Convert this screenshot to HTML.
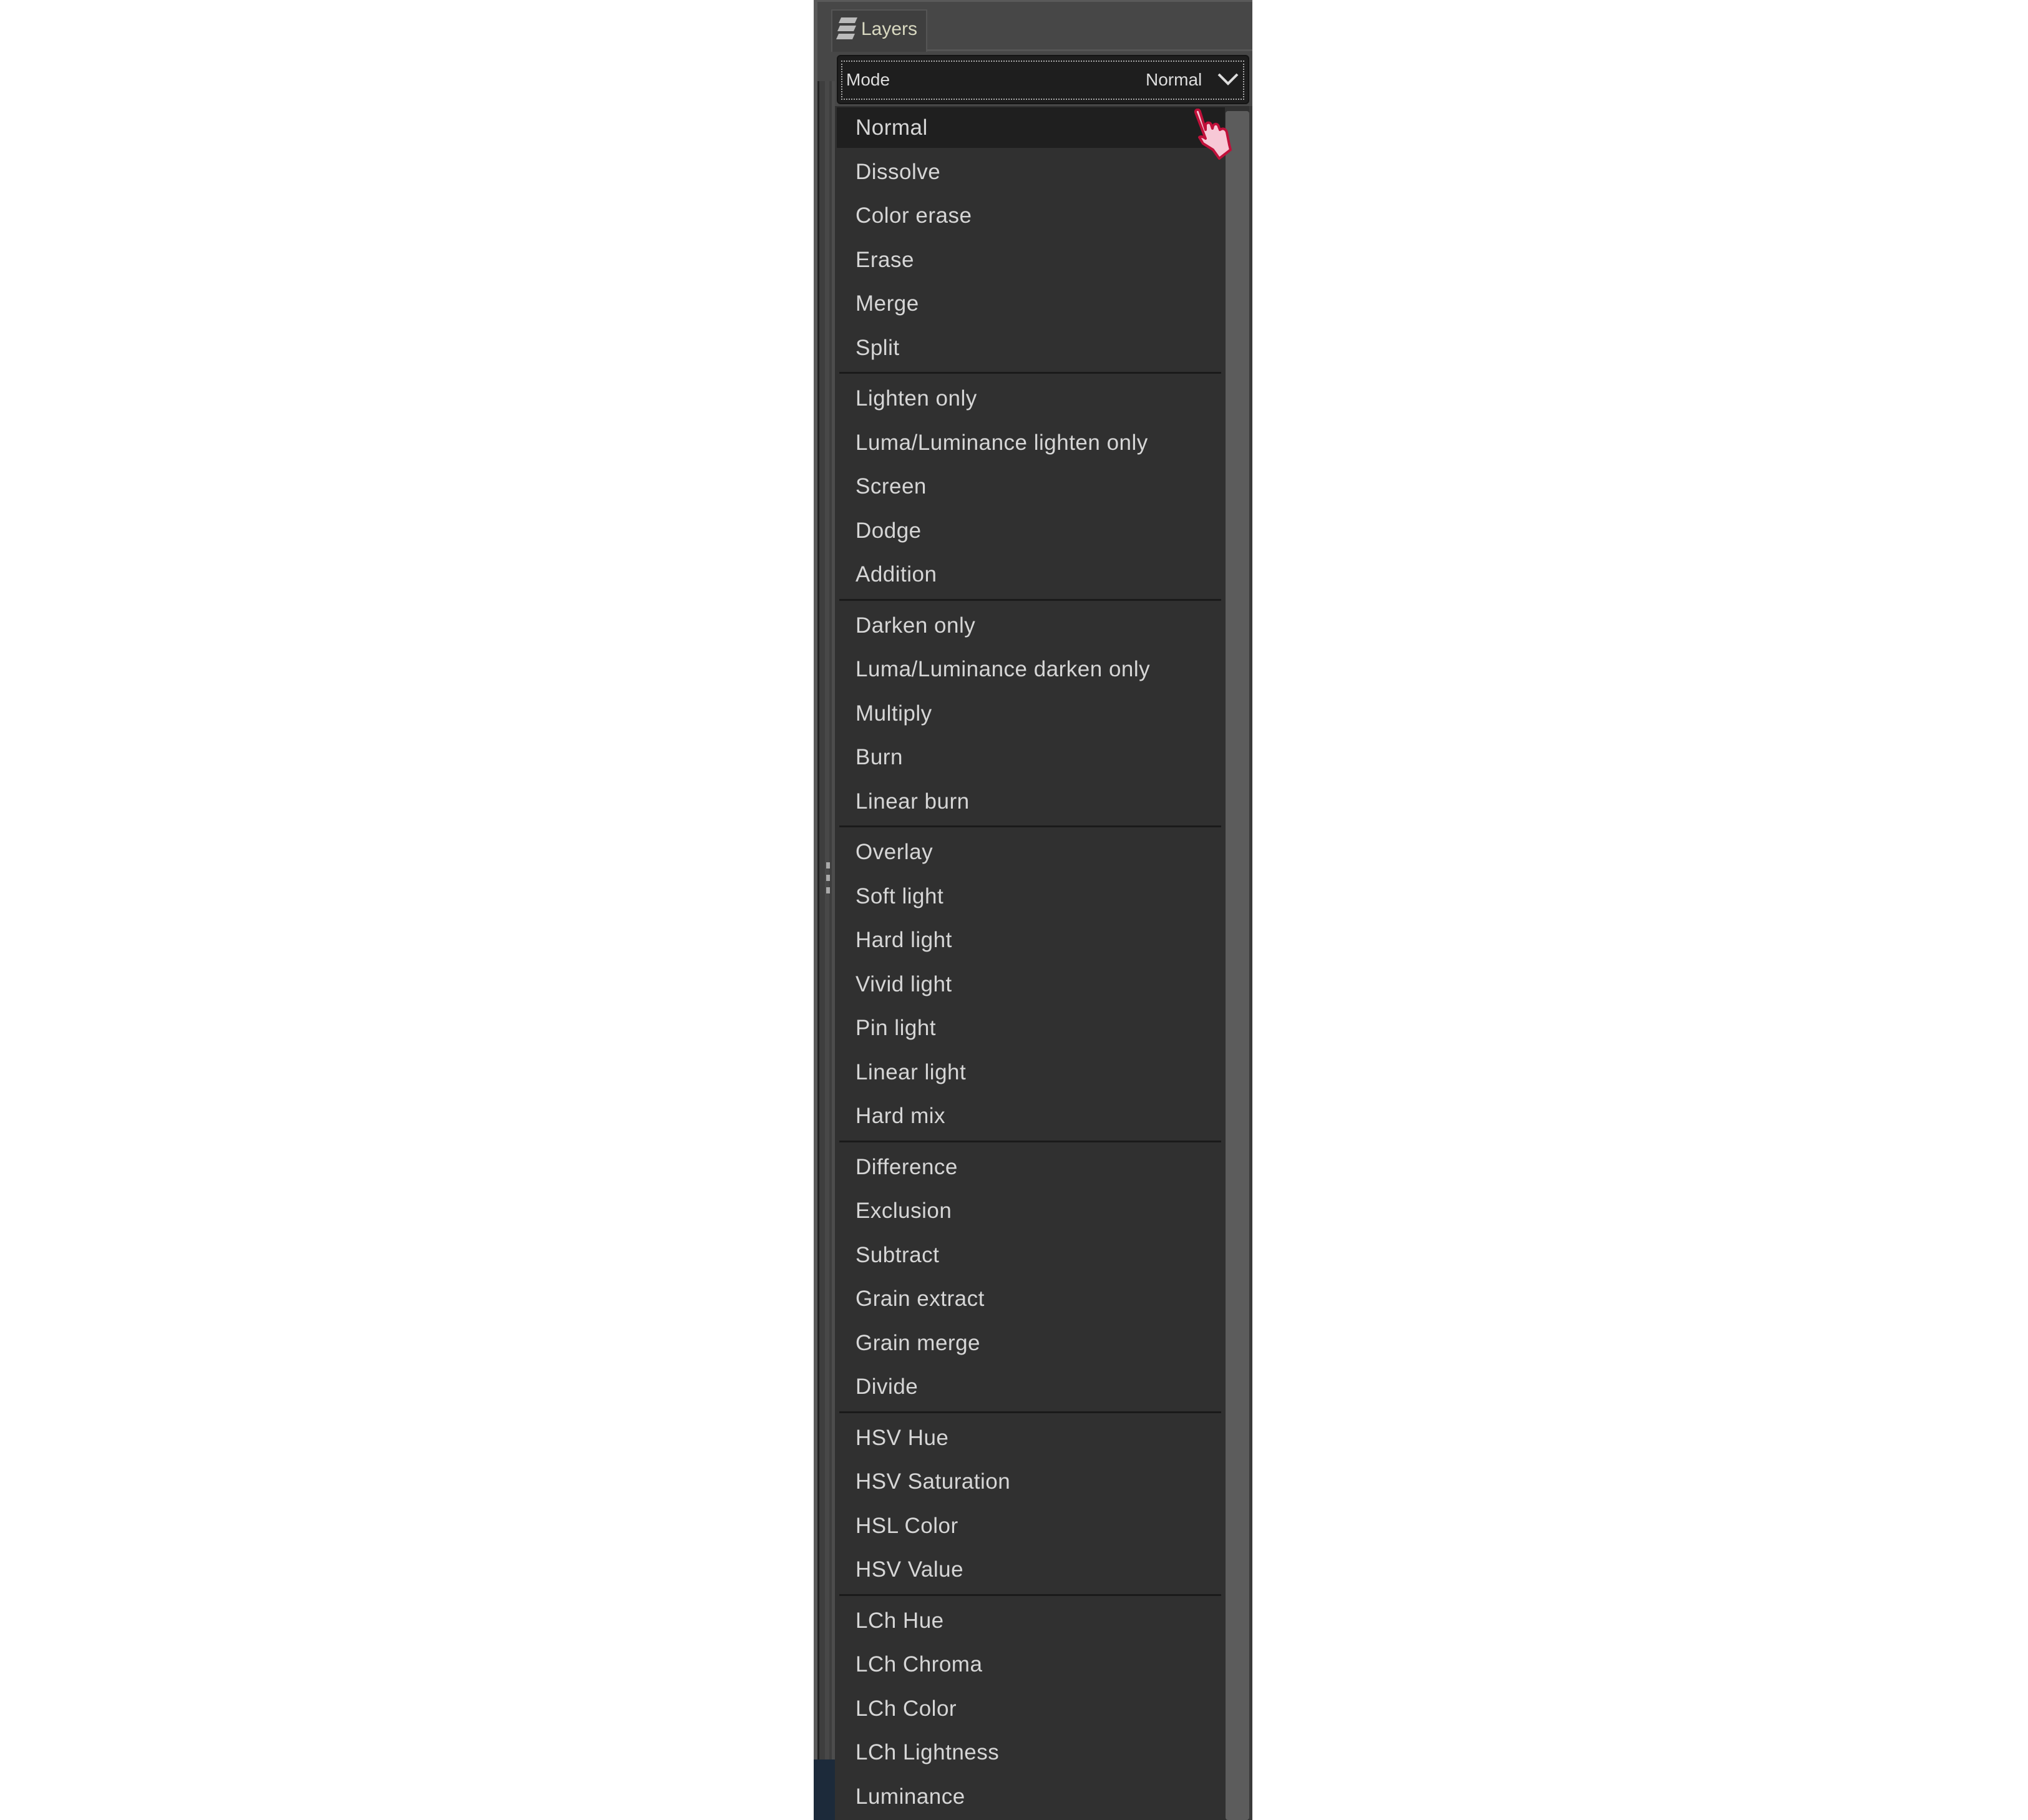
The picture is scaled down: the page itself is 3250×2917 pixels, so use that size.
<!DOCTYPE html>
<html><head><meta charset="utf-8"><style>
*{margin:0;padding:0;box-sizing:border-box}
body{width:3250px;height:2917px;background:#fff;position:relative;overflow:hidden;font-family:"Liberation Sans",sans-serif}
.a{position:absolute}
.item{position:absolute;left:1371px;color:#d6d6d6;font-size:35px;letter-spacing:0.5px;line-height:70px;height:70px;white-space:nowrap}
.sep{position:absolute;left:1345px;width:612px;height:3px;background:#1a1a1a}
</style></head><body>
<div class="a" style="left:1304px;top:0;width:703px;height:2917px;background:#474747"></div>
<div class="a" style="left:1304px;top:0;width:703px;height:3px;background:#5a5a5a"></div>
<div class="a" style="left:1304px;top:0;width:6px;height:2917px;background:#5a5a5a"></div>
<div class="a" style="left:1310px;top:130px;width:3px;height:2787px;background:#222"></div>
<div class="a" style="left:1313px;top:130px;width:25px;height:2787px;background:#3e3e3e"></div>
<div class="a" style="left:1322px;top:130px;width:7px;height:2787px;background:#484848"></div>
<div class="a" style="left:1333px;top:130px;width:5px;height:2787px;background:#4d4d4d"></div>
<div class="a" style="left:1304px;top:2820px;width:34px;height:97px;background:#1c2a3a"></div>
<div class="a" style="left:1324px;top:1382px;width:6px;height:10px;background:#aaa"></div>
<div class="a" style="left:1324px;top:1402px;width:6px;height:10px;background:#aaa"></div>
<div class="a" style="left:1324px;top:1422px;width:6px;height:10px;background:#aaa"></div>
<!-- tab -->
<div class="a" style="left:1332px;top:15px;width:154px;height:68px;background:#3f3f3f;border:2px solid #555;border-bottom:none"></div>
<div class="a" style="left:1486px;top:79px;width:521px;height:3px;background:#555"></div>
<svg class="a" style="left:1340px;top:28px" width="36" height="38" viewBox="0 0 36 38"><g fill="#bbb"><path d="M8 0h26l-4 9H4z"/><path d="M6 13h26l-4 9H2z"/><path d="M4 26h26l-4 9H0z"/></g></svg>
<div class="a" style="left:1380px;top:27px;color:#d8d8c0;font-size:30px;line-height:40px">Layers</div>
<!-- combo -->
<div class="a" style="left:1341px;top:88px;width:661px;height:79px;background:#1e1e1e;border-radius:6px;border:2px solid #141414"></div>
<div class="a" style="left:1348px;top:97px;width:646px;height:63px;border:2px dotted #aaa"></div>
<div class="a" style="left:1356px;top:110px;color:#ddd;font-size:28px;line-height:36px">Mode</div>
<div class="a" style="left:1836px;top:110px;color:#ddd;font-size:28px;line-height:36px">Normal</div>
<svg class="a" style="left:1950px;top:116px" width="36" height="22"><path d="M3 3l15 15 15-15" fill="none" stroke="#ddd" stroke-width="4"/></svg>
<!-- menu -->
<div class="a" style="left:1338px;top:170px;width:669px;height:2747px;background:#303030"></div>
<div class="a" style="left:1341px;top:172px;width:622px;height:65px;background:#1f1f1f"></div>
<div class="a" style="left:1964px;top:178px;width:38px;height:2739px;background:#5c5c5c;border-radius:4px"></div>
<div class="a" style="left:2002px;top:170px;width:5px;height:2747px;background:#3a3a3a"></div>
<div id="m"></div>
<script>
var g=[["Normal","Dissolve","Color erase","Erase","Merge","Split"],["Lighten only","Luma/Luminance lighten only","Screen","Dodge","Addition"],["Darken only","Luma/Luminance darken only","Multiply","Burn","Linear burn"],["Overlay","Soft light","Hard light","Vivid light","Pin light","Linear light","Hard mix"],["Difference","Exclusion","Subtract","Grain extract","Grain merge","Divide"],["HSV Hue","HSV Saturation","HSL Color","HSV Value"],["LCh Hue","LCh Chroma","LCh Color","LCh Lightness","Luminance"]];
var y=170,h="";
g.forEach(function(a,i){if(i){h+='<div class="sep" style="top:'+Math.round(y+3)+'px"></div>';y+=11;}a.forEach(function(t){h+='<div class="item" style="top:'+Math.round(y)+'px">'+t+'</div>';y+=70.5;});});
document.getElementById("m").innerHTML=h;
</script>
<!-- cursor -->
<svg class="a" style="left:1910px;top:174px" width="72" height="84" viewBox="0 0 72 84"><path d="M6 6C5 1 12 0 13 5L22 34 22 26C24 21 30 22 31 26L33 32 34 28C36 23 42 24 43 29L45 34 47 33C51 31 55 34 56 38L60 58 62 66 44 80 34 66 18 56 12 46C14 44 18 45 22 48z" fill="#f7c8d6" stroke="#c0103a" stroke-width="4" stroke-linejoin="round"/></svg>
</body></html>
